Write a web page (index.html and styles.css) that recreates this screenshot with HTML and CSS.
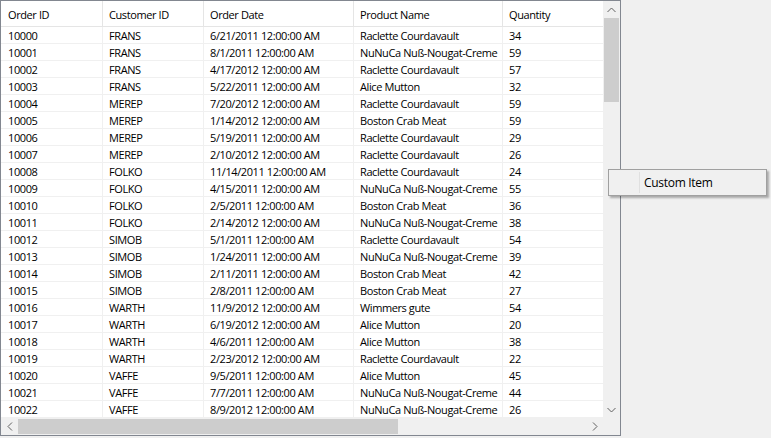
FILE: index.html
```html
<!DOCTYPE html>
<html>
<head>
<meta charset="utf-8">
<link rel="stylesheet" href="styles.css">
</head>
<body>
<div class="grid">
  <div class="main">
    <div class="cells">
      <div class="row head">
        <div class="c">Order ID</div><div class="c">Customer ID</div><div class="c">Order Date</div><div class="c">Product Name</div><div class="c">Quantity</div>
      </div>
      <div class="row"><div class="c">10000</div><div class="c">FRANS</div><div class="c">6/21/2011 12:00:00 AM</div><div class="c">Raclette Courdavault</div><div class="c">34</div></div>
      <div class="row"><div class="c">10001</div><div class="c">FRANS</div><div class="c">8/1/2011 12:00:00 AM</div><div class="c">NuNuCa Nuß-Nougat-Creme</div><div class="c">59</div></div>
      <div class="row"><div class="c">10002</div><div class="c">FRANS</div><div class="c">4/17/2012 12:00:00 AM</div><div class="c">Raclette Courdavault</div><div class="c">57</div></div>
      <div class="row"><div class="c">10003</div><div class="c">FRANS</div><div class="c">5/22/2011 12:00:00 AM</div><div class="c">Alice Mutton</div><div class="c">32</div></div>
      <div class="row"><div class="c">10004</div><div class="c">MEREP</div><div class="c">7/20/2012 12:00:00 AM</div><div class="c">Raclette Courdavault</div><div class="c">59</div></div>
      <div class="row"><div class="c">10005</div><div class="c">MEREP</div><div class="c">1/14/2012 12:00:00 AM</div><div class="c">Boston Crab Meat</div><div class="c">59</div></div>
      <div class="row"><div class="c">10006</div><div class="c">MEREP</div><div class="c">5/19/2011 12:00:00 AM</div><div class="c">Raclette Courdavault</div><div class="c">29</div></div>
      <div class="row"><div class="c">10007</div><div class="c">MEREP</div><div class="c">2/10/2012 12:00:00 AM</div><div class="c">Raclette Courdavault</div><div class="c">26</div></div>
      <div class="row"><div class="c">10008</div><div class="c">FOLKO</div><div class="c">11/14/2011 12:00:00 AM</div><div class="c">Raclette Courdavault</div><div class="c">24</div></div>
      <div class="row"><div class="c">10009</div><div class="c">FOLKO</div><div class="c">4/15/2011 12:00:00 AM</div><div class="c">NuNuCa Nuß-Nougat-Creme</div><div class="c">55</div></div>
      <div class="row"><div class="c">10010</div><div class="c">FOLKO</div><div class="c">2/5/2011 12:00:00 AM</div><div class="c">Boston Crab Meat</div><div class="c">36</div></div>
      <div class="row"><div class="c">10011</div><div class="c">FOLKO</div><div class="c">2/14/2012 12:00:00 AM</div><div class="c">NuNuCa Nuß-Nougat-Creme</div><div class="c">38</div></div>
      <div class="row"><div class="c">10012</div><div class="c">SIMOB</div><div class="c">5/1/2011 12:00:00 AM</div><div class="c">Raclette Courdavault</div><div class="c">54</div></div>
      <div class="row"><div class="c">10013</div><div class="c">SIMOB</div><div class="c">1/24/2011 12:00:00 AM</div><div class="c">NuNuCa Nuß-Nougat-Creme</div><div class="c">39</div></div>
      <div class="row"><div class="c">10014</div><div class="c">SIMOB</div><div class="c">2/11/2011 12:00:00 AM</div><div class="c">Boston Crab Meat</div><div class="c">42</div></div>
      <div class="row"><div class="c">10015</div><div class="c">SIMOB</div><div class="c">2/8/2011 12:00:00 AM</div><div class="c">Boston Crab Meat</div><div class="c">27</div></div>
      <div class="row"><div class="c">10016</div><div class="c">WARTH</div><div class="c">11/9/2012 12:00:00 AM</div><div class="c">Wimmers gute</div><div class="c">54</div></div>
      <div class="row"><div class="c">10017</div><div class="c">WARTH</div><div class="c">6/19/2012 12:00:00 AM</div><div class="c">Alice Mutton</div><div class="c">20</div></div>
      <div class="row"><div class="c">10018</div><div class="c">WARTH</div><div class="c">4/6/2011 12:00:00 AM</div><div class="c">Alice Mutton</div><div class="c">38</div></div>
      <div class="row"><div class="c">10019</div><div class="c">WARTH</div><div class="c">2/23/2012 12:00:00 AM</div><div class="c">Raclette Courdavault</div><div class="c">22</div></div>
      <div class="row"><div class="c">10020</div><div class="c">VAFFE</div><div class="c">9/5/2011 12:00:00 AM</div><div class="c">Alice Mutton</div><div class="c">45</div></div>
      <div class="row"><div class="c">10021</div><div class="c">VAFFE</div><div class="c">7/7/2011 12:00:00 AM</div><div class="c">NuNuCa Nuß-Nougat-Creme</div><div class="c">44</div></div>
      <div class="row"><div class="c">10022</div><div class="c">VAFFE</div><div class="c">8/9/2012 12:00:00 AM</div><div class="c">NuNuCa Nuß-Nougat-Creme</div><div class="c">26</div></div>
    </div>
    <div class="vscroll">
      <div class="arrow"><svg width="9" height="6" viewBox="0 0 9 6"><polyline points="0.5,5 4.5,1 8.5,5" fill="none" stroke="#606060" stroke-width="1"/></svg></div>
      <div class="vtrack"><div class="vthumb"></div></div>
      <div class="arrow"><svg width="9" height="6" viewBox="0 0 9 6"><polyline points="0.5,1 4.5,5 8.5,1" fill="none" stroke="#606060" stroke-width="1"/></svg></div>
    </div>
  </div>
  <div class="hbar">
    <div class="hscroll">
      <div class="arrow"><svg width="6" height="9" viewBox="0 0 6 9"><polyline points="5,0.5 1,4.5 5,8.5" fill="none" stroke="#606060" stroke-width="1"/></svg></div>
      <div class="htrack"><div class="hthumb"></div></div>
      <div class="arrow"><svg width="6" height="9" viewBox="0 0 6 9"><polyline points="1,0.5 5,4.5 1,8.5" fill="none" stroke="#606060" stroke-width="1"/></svg></div>
    </div>
    <div class="corner"></div>
  </div>
</div>
<div class="menu">
  <div class="menu-item"><span class="menu-icon"></span><span class="menu-text">Custom Item</span></div>
</div>
</body>
</html>
```
FILE: styles.css
```css
html, body {
  margin: 0;
  padding: 0;
  background: #f0f0f0;
  font-family: "Open Sans", "Noto Sans", sans-serif;
  font-size: 11px;
  letter-spacing: -0.4px;
  color: #000;
}
.grid {
  box-sizing: border-box;
  width: 621px;
  height: 436px;
  border: 1px solid #828790;
  background: #fff;
  display: flex;
  flex-direction: column;
}
.main {
  display: flex;
  height: 417px;
}
.cells {
  flex: 1;
  overflow: hidden;
}
.row {
  display: grid;
  grid-template-columns: 102px 101px 150px 149px 300px;
  height: 17px;
}
.c {
  box-sizing: border-box;
  border-right: 1px solid #f0f0f0;
  border-bottom: 1px solid #f0f0f0;
  padding-left: 6px;
  line-height: 17px;
  white-space: nowrap;
  overflow: hidden;
}
.c:first-child {
  padding-left: 7px;
}
.row.head {
  height: 26px;
}
.head .c {
  line-height: 27px;
  border-right-color: #e5e5e5;
  border-bottom-color: #e5e5e5;
}
.vscroll {
  width: 17px;
  display: flex;
  flex-direction: column;
  background: #f0f0f0;
}
.vscroll .arrow {
  height: 17px;
  display: flex;
  align-items: center;
  justify-content: center;
}
.vtrack {
  flex: 1;
  padding: 0 1px;
}
.vthumb {
  height: 84px;
  background: #cdcdcd;
}
.hbar {
  display: flex;
  height: 17px;
}
.hscroll {
  flex: 1;
  display: flex;
  background: #f0f0f0;
}
.hscroll .arrow {
  width: 17px;
  display: flex;
  align-items: center;
  justify-content: center;
}
.htrack {
  flex: 1;
  padding: 1px 0;
}
.hthumb {
  width: 380px;
  height: 100%;
  background: #cdcdcd;
}
.corner {
  width: 17px;
  background: #f0f0f0;
}
.menu {
  position: absolute;
  left: 608px;
  top: 169px;
  width: 159px;
  height: 27px;
  box-sizing: border-box;
  border: 1px solid #a0a0a0;
  background: #f0f0f0;
  box-shadow: 2px 2px 2px rgba(0,0,0,0.3);
  padding: 2px;
}
.menu-item {
  display: flex;
  height: 21px;
  align-items: center;
}
.menu-icon {
  width: 28px;
  height: 100%;
  border-right: 1px solid #e0e0e0;
}
.menu-text {
  padding-left: 4px;
  font-size: 12px;
  letter-spacing: -0.3px;
}
```
